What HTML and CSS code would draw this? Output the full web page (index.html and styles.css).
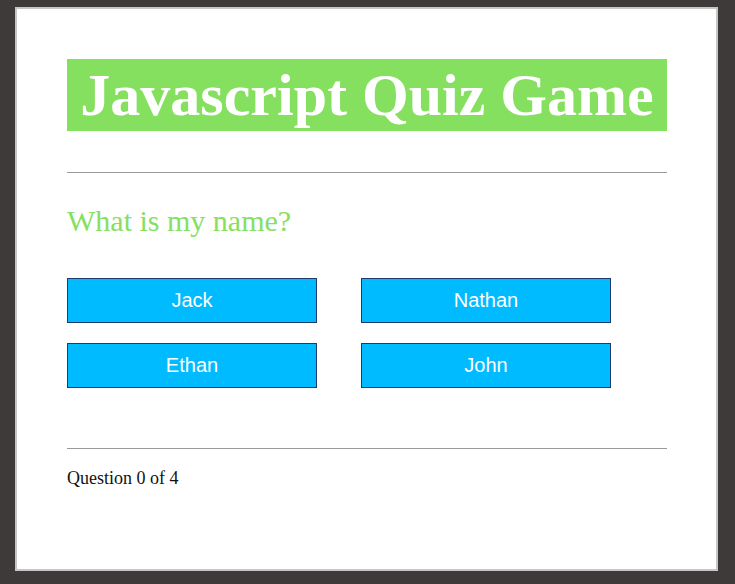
FILE: index.html
```html
<!DOCTYPE html>
<html>
<head>
<meta charset="utf-8">
<link rel="stylesheet" href="styles.css">
</head>
<body>
<div class="quiz">
  <h1 class="title">Javascript Quiz Game</h1>
  <hr class="rule">
  <p class="question">What is my name?</p>
  <div class="choices">
    <button class="choice">Jack</button>
    <button class="choice">Nathan</button>
    <button class="choice">Ethan</button>
    <button class="choice">John</button>
  </div>
  <hr class="rule rule-bottom">
  <p class="progress">Question 0 of 4</p>
</div>
</body>
</html>
```
FILE: styles.css
```css
html, body {
  margin: 0;
  padding: 0;
  background: #3e3a39;
}
body {
  padding-top: 7px;
  font-family: "Liberation Serif", "Times New Roman", serif;
}
.quiz {
  box-sizing: content-box;
  width: 599px;
  height: 460px;
  margin: 0 0 0 15px;
  padding: 50px;
  background: #ffffff;
  border: 2px solid #c6c6c6;
  display: flex;
  flex-direction: column;
}
.title {
  margin: 0;
  width: 600px;
  height: 72px;
  line-height: 72px;
  background: #85e060;
  color: #ffffff;
  font-family: "Liberation Serif", "Times New Roman", serif;
  font-weight: bold;
  font-size: 60px;
  text-align: center;
  white-space: nowrap;
}
.rule {
  width: 600px;
  margin: 41px 0 0 0;
  border: 0;
  border-top: 1px solid #9a9a9a;
  height: 0;
}
.question {
  margin: 33px 0 0 0;
  color: #85e060;
  font-size: 30px;
  line-height: 30px;
}
.choices {
  margin-top: 42px;
  display: grid;
  grid-template-columns: 250px 250px;
  column-gap: 44px;
  row-gap: 20px;
}
.choice {
  box-sizing: border-box;
  width: 250px;
  height: 45px;
  background: #00bbff;
  border: 1px solid #1d3c6b;
  color: #ffffff;
  font-family: "Liberation Sans", Arial, sans-serif;
  font-size: 20px;
  padding: 0;
  margin: 0;
}
.rule-bottom {
  margin-top: 60px;
}
.progress {
  margin: 18px 0 0 0;
  font-size: 18px;
  line-height: 22px;
  color: #111111;
}
```
